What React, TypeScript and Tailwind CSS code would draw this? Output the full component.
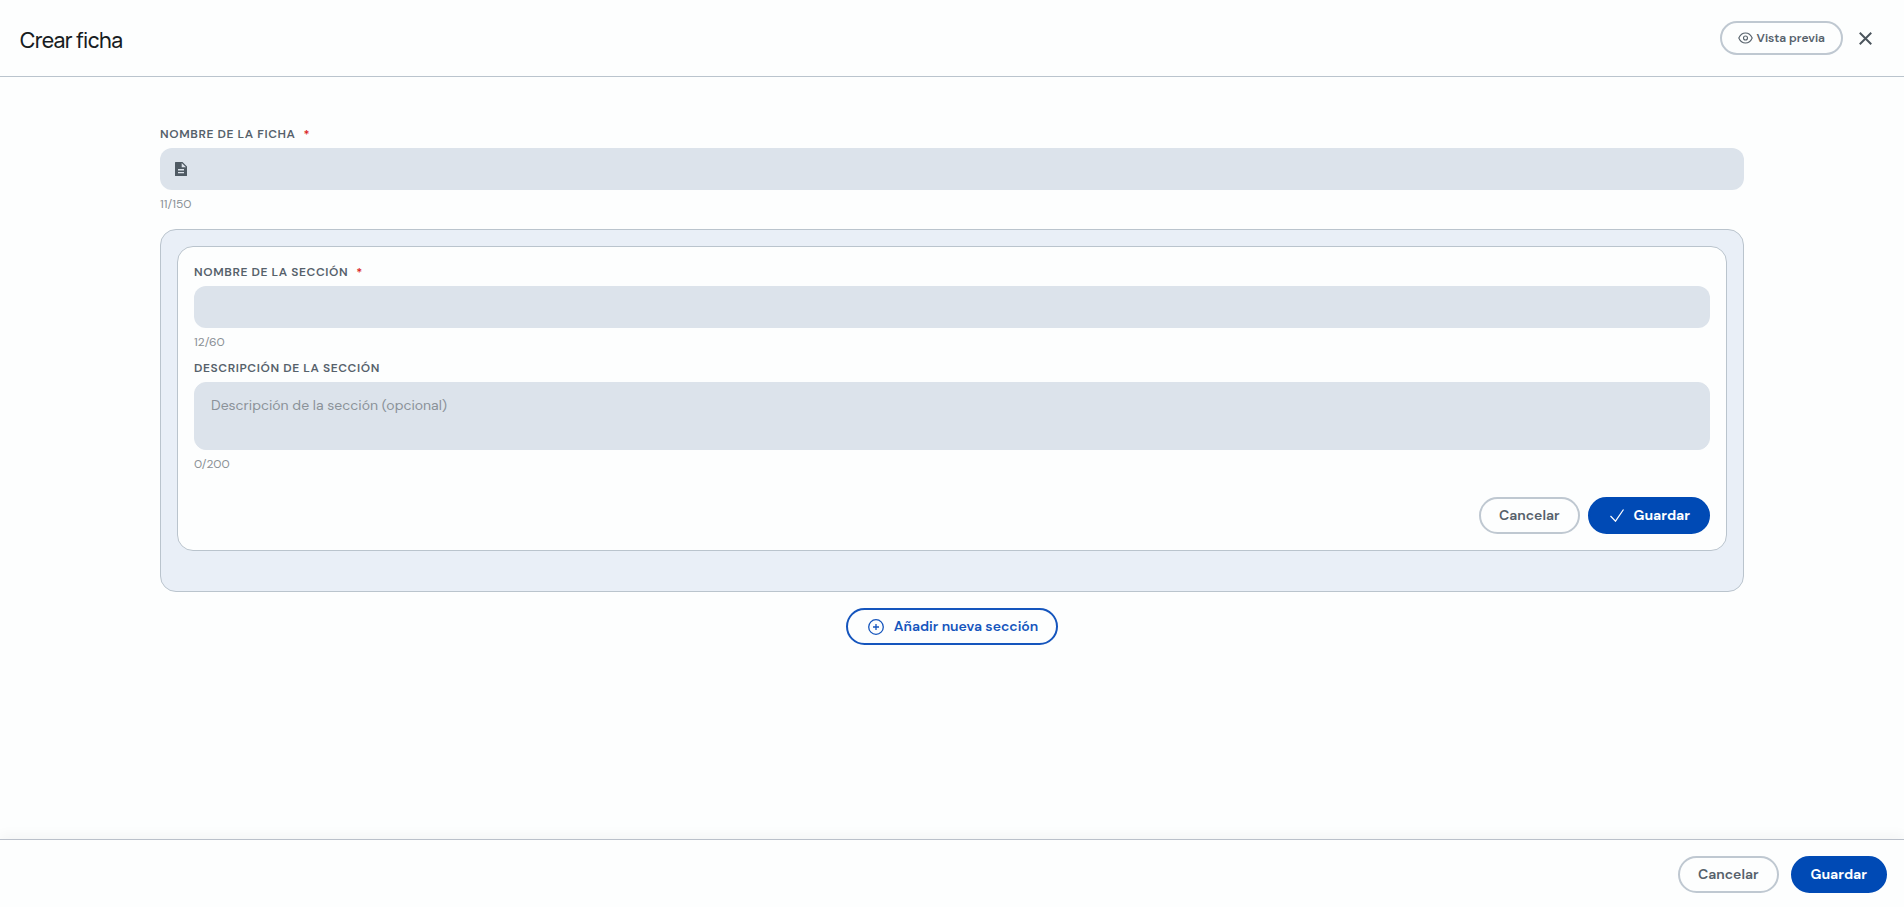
import { useState } from "react";
import clsx from "clsx";

interface FieldLabelProps {
  htmlFor: string;
  text: string;
  required?: boolean;
}

function FieldLabel({ htmlFor, text, required }: FieldLabelProps) {
  return (
    <label
      htmlFor={htmlFor}
      className="mb-[5px] block text-xs leading-[18px] font-semibold tracking-wider text-[#56616b] uppercase"
    >
      {text}
      {required && <span className="ml-2 text-[#d92020]">*</span>}
    </label>
  );
}

function Counter({ count, max }: { count: number; max: number }) {
  return (
    <p className="mt-[5px] text-xs leading-[18px] text-[#8a9095]">
      {count}/{max}
    </p>
  );
}

interface ActionButtonProps {
  variant: "outline" | "primary" | "accent";
  children: React.ReactNode;
}

function ActionButton({ variant, children }: ActionButtonProps) {
  return (
    <button
      type="button"
      className={clsx(
        "flex h-[37px] items-center justify-center rounded-full border-2 px-[18px] pb-0.5 text-sm",
        variant === "outline" &&
          "border-[#bfc8d1] font-semibold text-[#56616b] hover:bg-gray-50",
        variant === "primary" &&
          "border-[#004ab5] bg-[#004ab5] font-bold text-white hover:bg-[#003f9c]",
        variant === "accent" &&
          "border-[#1555bd] font-semibold text-[#1555bd] hover:bg-blue-50",
      )}
    >
      {children}
    </button>
  );
}

function EyeIcon() {
  return (
    <svg width="15" height="12" viewBox="0 0 15 12" fill="none" stroke="currentColor" strokeWidth="1.1">
      <path d="M.8 6C2.200 2.800 4.600 1 7.500 1s5.300 1.800 6.700 5c-1.400 3.200-3.800 5-6.700 5S2.200 9.200.8 6Z" />
      <circle cx="7.500" cy="6" r="2" />
    </svg>
  );
}

function FileIcon() {
  return (
    <svg width="12" height="14" viewBox="0 0 12 14" fill="currentColor">
      <path
        fillRule="evenodd"
        d="M.6 0H7.500L12 4.500v8.900a.6.6 0 0 1-.6.6H.6a.6.6 0 0 1-.6-.6V.6A.6.6 0 0 1 .6 0ZM6.700 1v4.300H11L6.700 1ZM3 7v1.600h6V7H3Zm0 3v1.200h6V10H3Z"
      />
    </svg>
  );
}

function CheckIcon() {
  return (
    <svg width="14" height="13" viewBox="0 0 14 13" fill="none" stroke="currentColor" strokeWidth="1.200">
      <path d="M.5 7 5.500 12.200 13.500.5" />
    </svg>
  );
}

function PlusCircleIcon() {
  return (
    <svg width="16" height="16" viewBox="0 0 16 16" fill="none" stroke="currentColor" strokeWidth="1.300">
      <circle cx="8" cy="8" r="7.300" />
      <path d="M8 5v6M5 8h6" />
    </svg>
  );
}

function CloseIcon() {
  return (
    <svg width="13" height="13" viewBox="0 0 12 12" fill="none" stroke="currentColor" strokeWidth="1.800">
      <path d="m.7.7 10.600 10.600M11.300.7.7 11.300" />
    </svg>
  );
}

export default function App() {
  const [name, setName] = useState("");
  const [sectionName, setSectionName] = useState("");
  const [description, setDescription] = useState("");

  return (
    <div className="flex min-h-screen flex-col bg-[#fdfefe] font-['DM_Sans','Inter','Liberation_Sans',sans-serif] text-[#4f5a63]">
      <header className="flex h-[77px] items-center justify-between border-b border-[#bac4cd] pr-8 pl-5">
        <h1 className="mt-1.5 font-['Manrope','DM_Sans','Inter',sans-serif] text-[21px] font-medium tracking-tight text-[#171c22]">
          Crear ficha
        </h1>
        <div className="flex items-center gap-4">
          <button
            type="button"
            className="flex h-[34px] items-center gap-1 rounded-full border-2 border-[#bfc8d1] px-4 text-xs font-semibold text-[#56616b] hover:bg-gray-50"
          >
            <EyeIcon />
            Vista previa
          </button>
          <button type="button" aria-label="Cerrar" className="text-[#4a545c]">
            <CloseIcon />
          </button>
        </div>
      </header>

      <main className="flex-1 px-40 pt-12">
        <FieldLabel htmlFor="sheet-name" text="Nombre de la ficha" required />
        <div className="flex h-[42px] items-center gap-3 rounded-xl bg-[#dce3eb] px-[15px]">
          <FileIcon />
          <input
            id="sheet-name"
            type="text"
            maxLength={150}
            value={name}
            onChange={(e) => setName(e.target.value)}
            className="h-full flex-1 bg-transparent text-sm outline-none"
          />
        </div>
        <Counter count={name.length || 11} max={150} />

        <section className="mt-4 rounded-2xl border border-[#bac4cd] bg-[#e9eff7] px-4 pt-4 pb-10">
          <div className="rounded-2xl border border-[#bac4cd] bg-[#fdfefe] p-4">
            <FieldLabel
              htmlFor="section-name"
              text="Nombre de la sección"
              required
            />
            <input
              id="section-name"
              type="text"
              maxLength={60}
              value={sectionName}
              onChange={(e) => setSectionName(e.target.value)}
              className="block h-[42px] w-full rounded-xl bg-[#dce3eb] px-4 text-sm outline-none"
            />
            <Counter count={sectionName.length || 12} max={60} />

            <div className="mt-2">
              <FieldLabel
                htmlFor="section-description"
                text="Descripción de la sección"
              />
              <textarea
                id="section-description"
                maxLength={200}
                value={description}
                onChange={(e) => setDescription(e.target.value)}
                placeholder="Descripción de la sección (opcional)"
                className="block h-[68px] w-full resize-none rounded-xl border border-[#dce3eb] bg-[#dce3eb] px-4 py-3 text-sm outline-none placeholder:text-[#8b9299]"
              />
              <Counter count={description.length} max={200} />
            </div>

            <div className="mt-6 flex justify-end gap-2">
              <ActionButton variant="outline">Cancelar</ActionButton>
              <ActionButton variant="primary">
                <span className="mt-0.5 mr-2.5 ml-0.5">
                  <CheckIcon />
                </span>
                Guardar
              </ActionButton>
            </div>
          </div>
        </section>

        <div className="mt-4 flex justify-center">
          <ActionButton variant="accent">
            <span className="mt-0.5 mr-2.5 ml-0.5">
              <PlusCircleIcon />
            </span>
            Añadir nueva sección
          </ActionButton>
        </div>
      </main>

      <footer className="flex h-[68px] items-start justify-end gap-3 border-t border-[#bac0ca] bg-[#fdfefe] px-[17px] pt-4 shadow-[0_-4px_12px_rgba(0,0,0,0.04)]">
        <ActionButton variant="outline">Cancelar</ActionButton>
        <ActionButton variant="primary">Guardar</ActionButton>
      </footer>
    </div>
  );
}
